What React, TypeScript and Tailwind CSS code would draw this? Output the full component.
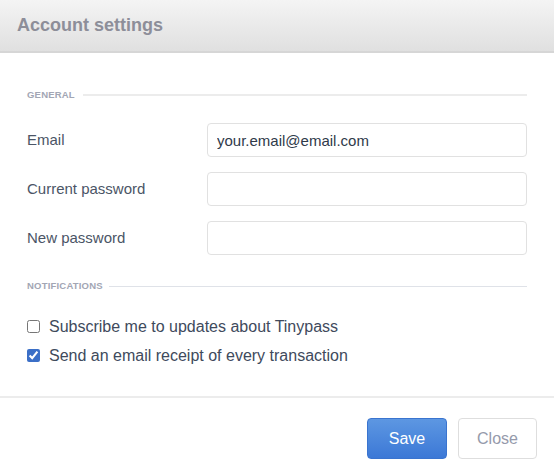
export default function App() {
  return (
    <div className="flex h-[475px] w-[554px] flex-col bg-white font-['Liberation_Sans',Arial,sans-serif]">
      <div className="flex h-[53px] items-center border-b-2 border-[#d6d6d6] bg-gradient-to-b from-[#f4f4f4] to-[#e0e0e0] px-[17px]">
        <h1 className="text-[18px] font-bold text-[#8d8e99]">Account settings</h1>
      </div>

      <div className="flex flex-1 flex-col px-[27px] pt-[35px]">
        <div className="flex items-center gap-[8px]">
          <span className="text-[9.5px] font-bold tracking-[0.2px] text-[#a2a6b4]">GENERAL</span>
          <div className="h-[2px] flex-1 bg-[#ececec]" />
        </div>

        <div className="mt-[21px] flex flex-col gap-[15px]">
          {[
            { label: "Email", value: "your.email@email.com" },
            { label: "Current password", value: "" },
            { label: "New password", value: "" },
          ].map((f) => (
            <div key={f.label} className="flex items-center">
              <label className="w-[180px] text-[15px] text-[#4b5566]">{f.label}</label>
              <input
                readOnly
                value={f.value}
                className="h-[34px] flex-1 rounded-[4px] border border-[#e1e1e1] bg-white px-[9px] text-[15px] text-[#2f3a4a] outline-none"
              />
            </div>
          ))}
        </div>

        <div className="mt-[24px] flex items-center gap-[6px]">
          <span className="text-[9.5px] font-bold tracking-[0.2px] text-[#a2a6b4]">NOTIFICATIONS</span>
          <div className="h-px flex-1 bg-[#dfe2e8]" />
        </div>

        <div className="mt-[21px] flex flex-col gap-[5px]">
          <label className="flex items-center gap-[9px] text-[16px] text-[#404a5c]">
            <input type="checkbox" readOnly className="m-0 h-[13px] w-[13px]" />
            Subscribe me to updates about Tinypass
          </label>
          <label className="flex items-center gap-[9px] text-[16px] text-[#404a5c]">
            <input type="checkbox" readOnly checked className="m-0 h-[13px] w-[13px] accent-[#3b6fc7]" />
            Send an email receipt of every transaction
          </label>
        </div>
      </div>

      <div className="flex h-[79px] items-center justify-end gap-[11px] border-t-2 border-[#ececec] px-[17px] pt-[4px]">
        <button className="h-[41px] w-[80px] rounded-[4px] border border-[#3a74cf] bg-gradient-to-b from-[#5d97e2] to-[#3c78d6] text-[16px] text-white">
          Save
        </button>
        <button className="h-[41px] w-[79px] rounded-[4px] border border-[#dedede] bg-white text-[16px] text-[#959aab]">
          Close
        </button>
      </div>
    </div>
  );
}
